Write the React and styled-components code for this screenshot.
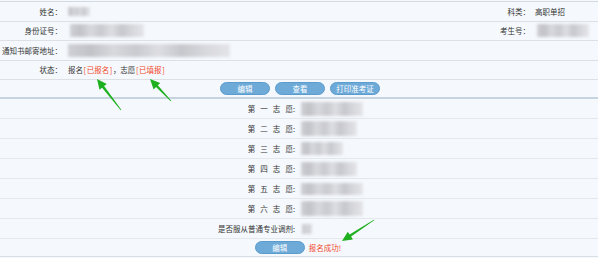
import React from "react";
import styled, { createGlobalStyle } from "styled-components";

const Global = createGlobalStyle`
  html, body { margin: 0; padding: 0; background: #f5f9fd; }
  body {
    font-family: "Noto Sans CJK SC", "Noto Sans", sans-serif;
    font-size: 7.5px;
    color: #333;
    overflow: hidden;
  }
`;

const Page = styled.div`
  position: relative;
  width: 598px;
  height: 258px;
  padding-top: 1px;
  box-sizing: border-box;
`;

const Table = styled.div`
  border-top: 1px solid #d3d9e0;
  display: flex;
  flex-direction: column;
`;

const InfoRow = styled.div`
  display: grid;
  grid-template-columns: ${(p) => (p.$wide ? "64px 1fr" : "64px 1fr 80px 66px")};
  align-items: center;
  height: 19.5px;
  box-sizing: border-box;
  border-bottom: 1px solid #dde1e6;
`;

const Label = styled.div`
  text-align: right;
  white-space: nowrap;
  padding-right: ${(p) => p.$pr ?? 2}px;
  line-height: 1;
`;

const Value = styled.div`
  display: flex;
  align-items: center;
  padding-left: ${(p) => p.$pl ?? 4}px;
  white-space: nowrap;
  line-height: 1;
`;

const Red = styled.span`
  color: #f2472b;
`;

const Bracket = styled.span`
  display: inline-block;
  width: 3.7px;
  text-align: center;
`;

const Blur = styled.span`
  display: inline-block;
  width: ${(p) => p.$w}px;
  height: ${(p) => p.$h ?? 12}px;
  background:
    linear-gradient(90deg,
      #c9c9ce 0%, #b9b9be 14%, #d4d4d8 28%, #c2c2c7 42%,
      #dadade 56%, #bfbfc4 70%, #d2d2d6 84%, #e2e2e6 100%);
  filter: blur(1.4px);
  opacity: 0.85;
`;

const ButtonBar = styled.div`
  display: flex;
  justify-content: center;
  align-items: center;
  gap: 5px;
  height: 19px;
  box-sizing: border-box;
  border-bottom: 2px solid #c6d4e2;
  padding-left: 2px;
`;

const Btn = styled.button`
  width: 50px;
  height: 13px;
  padding: 0;
  border: 1px solid #5b9ccd;
  border-radius: 7px;
  background: #6daad8;
  color: #fff;
  font-family: inherit;
  font-size: 7.5px;
  line-height: 11px;
  cursor: pointer;
`;

const WishRow = styled.div`
  display: grid;
  grid-template-columns: 296px 1fr;
  align-items: center;
  height: 20px;
  box-sizing: border-box;
  border-bottom: 1px solid #e4e8ed;
`;

const Spaced = styled.span`
  word-spacing: 3.4px;
`;

const FootRow = styled.div`
  display: flex;
  justify-content: center;
  align-items: center;
  gap: 4px;
  height: 17.5px;
  box-sizing: border-box;
  border-bottom: 1px solid #d9dee4;
  padding-right: 2px;
`;

const Success = styled.span`
  color: #f2472b;
  line-height: 1;
`;

const Overlay = styled.svg`
  position: absolute;
  left: 0;
  top: 0;
  pointer-events: none;
`;

function arrowPoints(x1, y1, x2, y2) {
  const dx = x2 - x1;
  const dy = y2 - y1;
  const len = Math.hypot(dx, dy);
  const ux = dx / len;
  const uy = dy / len;
  const nx = -uy;
  const ny = ux;
  const headLen = 10;
  const headW = 4.6;
  const tail = 0.35;
  const neck = 1.3;
  const bx = x2 - ux * headLen;
  const by = y2 - uy * headLen;
  const pts = [
    [x1 + nx * tail, y1 + ny * tail],
    [bx + nx * neck, by + ny * neck],
    [bx + nx * headW, by + ny * headW],
    [x2, y2],
    [bx - nx * headW, by - ny * headW],
    [bx - nx * neck, by - ny * neck],
    [x1 - nx * tail, y1 - ny * tail],
  ];
  return pts.map((p) => p.map((v) => v.toFixed(1)).join(",")).join(" ");
}

const arrows = [
  [121, 110, 97, 79],
  [171, 101, 150, 79],
  [374, 220, 342, 241],
];

const wishes = [
  ["第 一 志 愿:", 62, 14],
  ["第 二 志 愿:", 56, 15],
  ["第 三 志 愿:", 42, 13],
  ["第 四 志 愿:", 56, 14],
  ["第 五 志 愿:", 62, 12],
  ["第 六 志 愿:", 62, 15],
];

const Br = ({ children }) => (
  <Red>
    <Bracket>[</Bracket>
    {children}
    <Bracket>]</Bracket>
  </Red>
);

export default function App() {
  return (
    <>
      <Global />
      <Page>
        <Table>
          <InfoRow>
            <Label>姓名：</Label>
            <Value><Blur $w={22} $h={9} /></Value>
            <Label>科类：</Label>
            <Value $pl={3}>高职单招</Value>
          </InfoRow>
          <InfoRow>
            <Label>身份证号：</Label>
            <Value $pl={6}><Blur $w={74} $h={13} /></Value>
            <Label>考生号：</Label>
            <Value $pl={5}><Blur $w={52} $h={13} /></Value>
          </InfoRow>
          <InfoRow $wide>
            <Label>通知书邮寄地址：</Label>
            <Value><Blur $w={162} $h={13} /></Value>
          </InfoRow>
          <InfoRow $wide>
            <Label>状态：</Label>
            <Value>
              报名<Br>已报名</Br>，志愿<Br>已填报</Br>
            </Value>
          </InfoRow>
          <ButtonBar>
            <Btn>编辑</Btn>
            <Btn>查看</Btn>
            <Btn>打印准考证</Btn>
          </ButtonBar>
          {wishes.map(([label, w, h]) => (
            <WishRow key={label}>
              <Label $pr={1}><Spaced>{label}</Spaced></Label>
              <Value $pl={5}><Blur $w={w} $h={h} /></Value>
            </WishRow>
          ))}
          <WishRow>
            <Label $pr={1}>是否服从普通专业调剂:</Label>
            <Value $pl={6}><Blur $w={10} $h={10} /></Value>
          </WishRow>
          <FootRow>
            <Btn>编辑</Btn>
            <Success>报名成功!</Success>
          </FootRow>
        </Table>
        <Overlay width="598" height="258" viewBox="0 0 598 258">
          {arrows.map((a, i) => (
            <polygon key={i} points={arrowPoints(...a)} fill="#1fb01f" />
          ))}
        </Overlay>
      </Page>
    </>
  );
}
